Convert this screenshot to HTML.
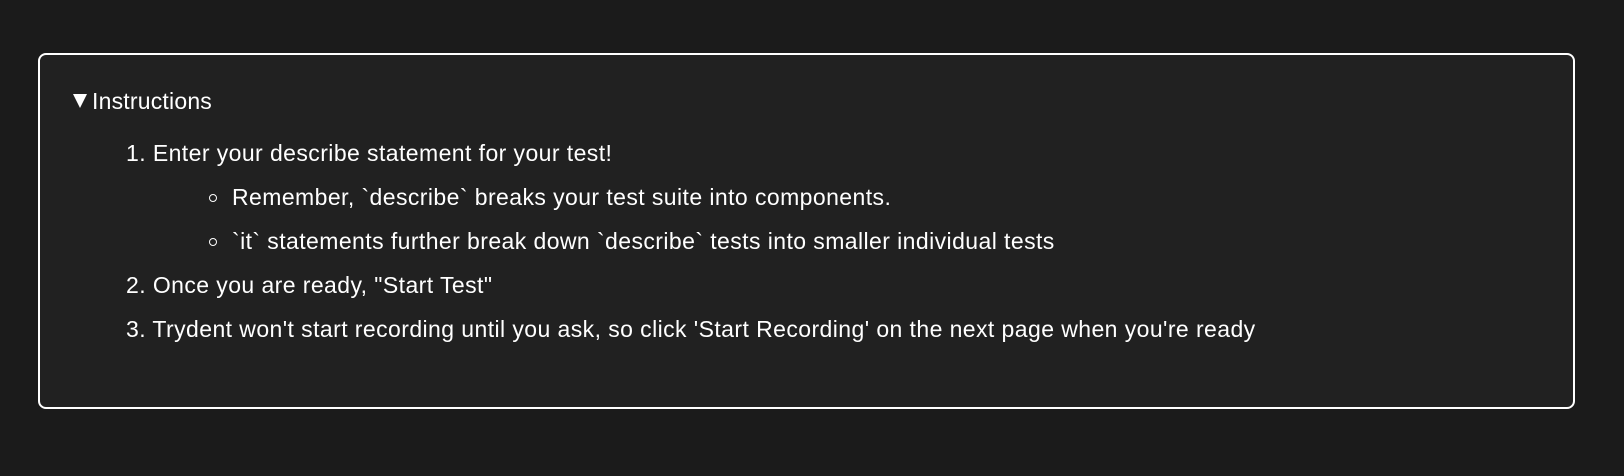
<!DOCTYPE html>
<html><head><style>
html,body{margin:0;padding:0;background:#1b1b1b;width:1624px;height:476px;overflow:hidden}
body{font-family:"Liberation Sans",Arial,sans-serif;color:#fff;font-size:23px;letter-spacing:0.42px}
.box{position:absolute;left:38px;top:53px;width:1533px;height:352px;border:2px solid #fff;border-radius:8px;background:#212121}
.t{position:absolute;white-space:nowrap;line-height:26px}
.tri{display:inline-block;width:0;height:0;border-left:7.5px solid transparent;border-right:7.5px solid transparent;border-top:14px solid #fff;margin-right:5px;vertical-align:1px}
.b{position:absolute;width:6px;height:6px;border:1.3px solid #fff;border-radius:50%}
</style></head><body>
<div class="box"></div>
<div class="t" style="left:73px;top:88px;letter-spacing:0.2px"><span class="tri"></span>Instructions</div>
<div class="t" style="left:126px;top:140px">1. Enter your describe statement for your test!</div>
<div class="b" style="left:209px;top:194px"></div>
<div class="t" style="left:232px;top:184px">Remember, `describe` breaks your test suite into components.</div>
<div class="b" style="left:209px;top:238px"></div>
<div class="t" style="left:232px;top:228px">`it` statements further break down `describe` tests into smaller individual tests</div>
<div class="t" style="left:126px;top:272px">2. Once you are ready, "Start Test"</div>
<div class="t" style="left:126px;top:316px">3. Trydent won't start recording until you ask, so click 'Start Recording' on the next page when you're ready</div>
</body></html>
